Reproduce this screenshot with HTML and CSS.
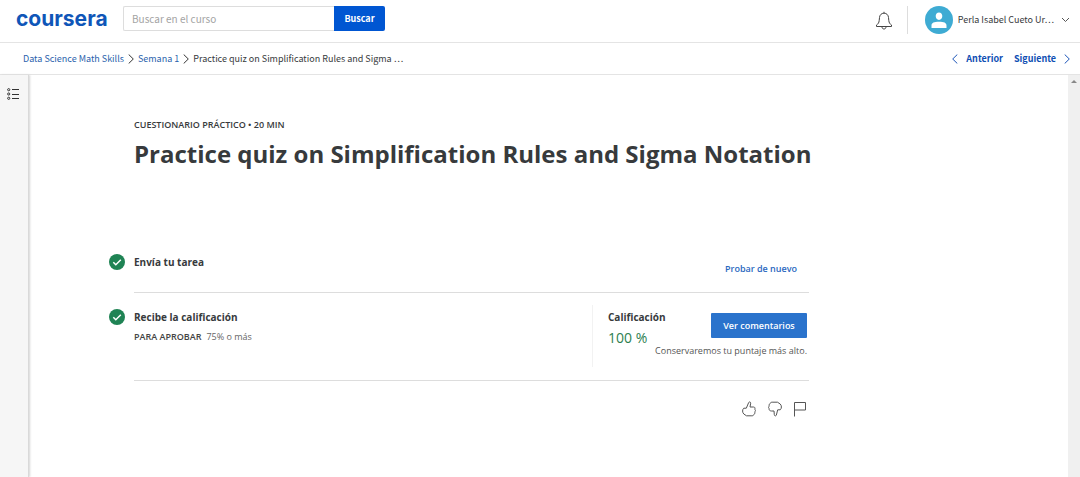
FILE: index.html
```
<!DOCTYPE html>
<html lang="es">
<head>
<meta charset="utf-8">
<title>Practice quiz on Simplification Rules and Sigma Notation</title>
<link rel="stylesheet" href="styles.css">
</head>
<body>
<header class="topbar">
  <a class="logo" href="#">coursera</a>
  <form class="search">
    <input class="search-input" type="text" placeholder="Buscar en el curso" aria-label="Buscar en el curso">
    <button class="search-button" type="submit">Buscar</button>
  </form>
  <div class="account">
    <button class="icon-button bell" type="button" aria-label="Notificaciones">
      <svg width="18" height="20" viewBox="0 0 18 20" fill="none" stroke="#444" stroke-width="1"><path d="M1.500 15.500h15v-1.500c-1.500-.9-2.500-2.200-2.700-4.500L13.500 6.500C13.300 4 11.600 2.200 9 2.200S4.700 4 4.500 6.500L4.200 9.500C4 11.800 3 13.100 1.500 14zM9 2V.8M7 15.800c0 1.400.8 2.200 2 2.200s2-.8 2-2.200"/></svg>
    </button>
    <button class="user" type="button">
      <svg width="28" height="28" viewBox="0 0 28 28"><circle cx="14" cy="14" r="14" fill="#3eabd3"/><path fill="#fff" d="M14 6.500c2 0 3.300 1.500 3.300 3.600S16 14 14 14s-3.300-1.800-3.300-3.900S12 6.500 14 6.500zM6.500 22v-2.600c0-2.600 2.500-3.700 7.500-3.700s7.500 1.100 7.500 3.700V22z"/></svg>
      <span class="user-name">Perla Isabel Cueto Ur…</span>
      <svg width="9" height="6" viewBox="0 0 9 6" fill="none" stroke="#555"><path d="M1 1l3.500 3.500L8 1"/></svg>
    </button>
  </div>
</header>
<nav class="crumbbar" aria-label="Ruta">
  <div class="crumbs">
    <a href="#">Data Science Math Skills</a>
    <svg width="6" height="10" viewBox="0 0 6 10" fill="none" stroke="#333"><path d="M.7.500l4.600 4.500L.7 9.500"/></svg>
    <a href="#">Semana 1</a>
    <svg width="6" height="10" viewBox="0 0 6 10" fill="none" stroke="#333"><path d="M.7.500l4.600 4.500L.7 9.500"/></svg>
    <span>Practice quiz on Simplification Rules and Sigma …</span>
  </div>
  <div class="pager">
    <a href="#"><svg width="6" height="10" viewBox="0 0 6 10" fill="none" stroke="#1c55b8"><path d="M5.300.500L.7 5l4.600 4.500"/></svg>Anterior</a>
    <a href="#">Siguiente<svg width="6" height="10" viewBox="0 0 6 10" fill="none" stroke="#1c55b8"><path d="M.7.500l4.600 4.500L.7 9.500"/></svg></a>
  </div>
</nav>
<div class="body">
  <aside class="rail">
    <button class="icon-button" type="button" aria-label="Menú del curso">
      <svg width="12" height="12" viewBox="0 0 12 12" fill="none" stroke="#333"><circle cx="1.700" cy="1.700" r="1.100"/><circle cx="1.700" cy="6" r="1.100"/><circle cx="1.700" cy="10.300" r="1.100"/><path d="M5 1.500h7M5 6.500h7M5 10.500h7"/></svg>
    </button>
  </aside>
  <main class="content">
    <p class="kicker">CUESTIONARIO PRÁCTICO • 20 MIN</p>
    <h1 class="title">Practice quiz on Simplification Rules and Sigma Notation</h1>
    <section class="step">
      <svg class="check" width="16" height="16" viewBox="0 0 16 16"><circle cx="8" cy="8" r="8" fill="#1f8354"/><path d="M4.300 8.200l2.500 2.500 5-5" fill="none" stroke="#fff" stroke-width="1.500"/></svg>
      <div class="step-row submit-row">
        <h2 class="step-title">Envía tu tarea</h2>
        <a class="retry" href="#">Probar de nuevo</a>
      </div>
    </section>
    <section class="step">
      <svg class="check" width="16" height="16" viewBox="0 0 16 16"><circle cx="8" cy="8" r="8" fill="#1f8354"/><path d="M4.300 8.200l2.500 2.500 5-5" fill="none" stroke="#fff" stroke-width="1.500"/></svg>
      <div class="step-row grade-row">
        <div>
          <h2 class="step-title">Recibe la calificación</h2>
          <p class="pass"><strong>PARA APROBAR</strong><span>75% o más</span></p>
        </div>
        <div class="grade">
          <div>
            <h2 class="step-title">Calificación</h2>
            <p class="score">100 %</p>
          </div>
          <div class="feedback">
            <button class="feedback-button" type="button">Ver comentarios</button>
            <p class="note">Conservaremos tu puntaje más alto.</p>
          </div>
        </div>
      </div>
    </section>
    <div class="reactions">
      <button class="icon-button" type="button" aria-label="Me gusta"><svg width="14" height="16" viewBox="0 0 14 16" fill="none" stroke="#555"><path d="M1.800 7.200h2.500L6.700 1.500c.5-1 2.100-.6 2 .7L8 6h3.500c1.500 0 1.800 1.300 1.200 2.200 1 .7 1 2 0 2.700.5 1.200 0 2-.8 2.400-.1 1-.9 1.500-2 1.500H4.500L1.800 13C.2 11.500.2 8.500 1.800 7.200z"/></svg></button>
      <button class="icon-button" type="button" aria-label="No me gusta"><svg width="14" height="16" viewBox="0 0 14 16" fill="none" stroke="#555"><path d="M12.200 8.800H9.700L8.300 14.300c-.5 1-2.100.6-2-.7L6 10H3.500C2 10 .7 9 1.300 7.800c-1-.7-1-2 0-2.700C.8 3.900 1.300 3.100 2.100 2.700 2.200 1.700 3 1.200 4.100 1.200h5.400L12.200 3c1.600 1.500 1.600 4.500 0 5.800z"/></svg></button>
      <button class="icon-button" type="button" aria-label="Reportar"><svg width="12" height="16" viewBox="0 0 12 16" fill="none" stroke="#555"><path d="M.5 15.500V1.500h11v7.500H.5"/></svg></button>
    </div>
  </main>
  <div class="scrolltrack" aria-hidden="true"><span class="scrollarrow"></span></div>
</div>
</body>
</html>
```
FILE: styles.css
```
* { box-sizing: border-box; }
body {
  margin: 0;
  min-height: 100vh;
  display: flex;
  flex-direction: column;
  background: #fff;
  color: #373a3c;
  font-family: "Open Sans", "Noto Sans", sans-serif;
}
h1, h2, p { margin: 0; }
a { text-decoration: none; }
svg { display: block; flex: none; }
button { font: inherit; border: 0; padding: 0; background: none; color: inherit; cursor: pointer; }
.icon-button { display: block; }

.topbar, .crumbbar {
  display: flex;
  align-items: center;
  border-bottom: 1px solid #e4e4e4;
  font-family: "Noto Sans CJK SC", "Open Sans", sans-serif;
}
.topbar { height: 43px; padding: 0 10px 5px 16px; }
.logo {
  width: 90px;
  color: #0f56b8;
  font: 700 21px/32px "Inter", sans-serif;
}
.search { display: flex; width: 262px; margin-left: 17px; }
.search-input {
  flex: 1;
  min-width: 0;
  height: 25px;
  padding: 0 8px;
  border: 1px solid #ddd;
  border-right: 0;
  border-radius: 2px 0 0 2px;
  font: 10px/16px "Noto Sans CJK SC", sans-serif;
}
.search-input::placeholder { color: #a3a3a3; }
.search-button {
  width: 51px;
  height: 25px;
  border-radius: 0 2px 2px 0;
  background: #0056d2;
  color: #fff;
  font-size: 9px;
  font-weight: 700;
}
.account { display: flex; align-items: center; margin-left: auto; }
.bell { padding: 5px 14px 0 0; }
.user {
  display: flex;
  align-items: center;
  padding-left: 17px;
  border-left: 1px solid #ddd;
  margin-top: 3px;
}
.user-name { margin: 0 7px 0 5px; font-size: 9px; line-height: 16px; }

.crumbbar { height: 32px; padding: 0 10px 0 23px; justify-content: space-between; font-size: 9px; line-height: 16px; }
.crumbs, .pager a { display: flex; align-items: center; }
.crumbs { gap: 4px; }
.crumbs a { color: #2a5fac; }
.pager { display: flex; gap: 11px; font-weight: 700; }
.pager a { gap: 8px; color: #0f4fb3; }

.body { flex: 1; display: flex; }
.rail {
  width: 29px;
  padding: 13px 0 0 7px;
  background: #f6f6f6;
  border-right: 1px solid #d9d9d9;
  box-shadow: 1px 0 2px #d5d5d5;
}
.content { flex: 1; max-width: 780px; padding: 43px 0 20px 80px; }
.kicker, .pass, .note { font-size: 9px; line-height: 14px; }
.kicker { padding-left: 25px; font-weight: 600; }
.title { margin-bottom: 74px; padding: 4px 0 0 25px; font-size: 24px; line-height: 36px; font-weight: 700; white-space: nowrap; }
.step { display: flex; gap: 9px; }
.step + .step { margin-top: 16px; }
.check { margin-top: 8px; }
.step + .step .check { margin-top: 0; }
.step-row { flex: 1; display: flex; justify-content: space-between; border-bottom: 1px solid #ddd; }
.step-title { font-size: 10px; line-height: 16px; font-weight: 700; }
.submit-row { height: 47px; padding: 8px 12px 0 0; }
.retry { color: #2a67c0; font-size: 9px; line-height: 16px; font-weight: 600; margin-top: 7px; }
.grade-row { padding-bottom: 13px; }
.pass { display: flex; gap: 5px; margin-top: 5px; color: #666; }
.pass strong { font-weight: 600; color: #444; }
.grade { display: flex; justify-content: space-between; width: 217px; min-height: 62px; margin-top: -4px; padding: 4px 2px 0 15px; border-left: 1px solid #f2f2f2; }
.score { margin-top: 3px; color: #2d8050; font-size: 14px; line-height: 20px; white-space: nowrap; }
.feedback { display: flex; flex-direction: column; align-items: flex-end; width: 150px; margin-left: -10px; }
.feedback-button { width: 96px; height: 25px; margin-top: 4px; background: #2a73cc; color: #fff; font-size: 9px; font-weight: 600; border-radius: 1px; }
.note { margin-top: 6px; color: #555; white-space: nowrap; }
.reactions { display: flex; justify-content: flex-end; gap: 12px; margin-top: 20px; padding-right: 3px; }
.scrolltrack { width: 12px; margin-left: auto; padding-top: 5px; background: #f0f0f0; }
.scrollarrow { display: block; width: 6px; margin: 0 auto; border: 3px solid transparent; border-top: 0; border-bottom-color: #888; }
```
